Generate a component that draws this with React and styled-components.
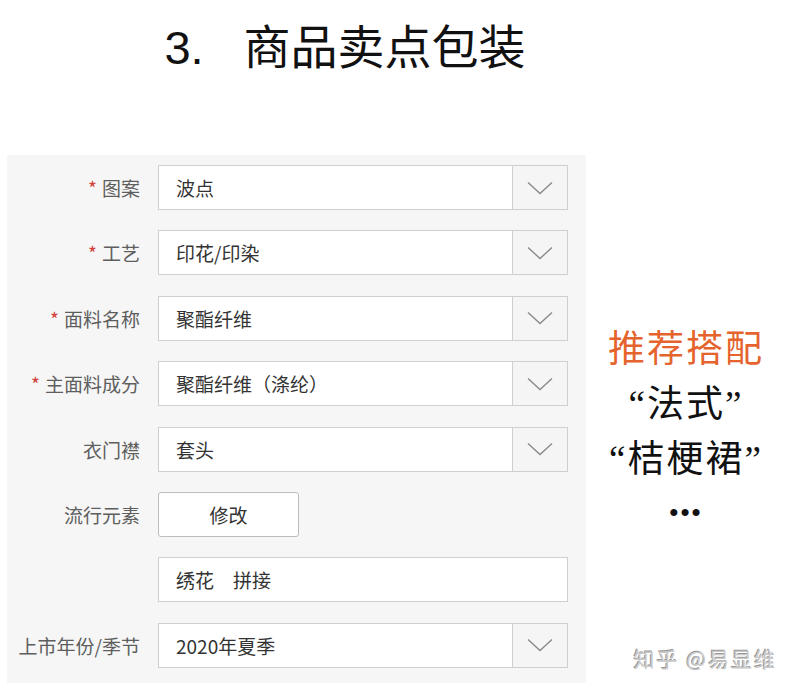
import styled, { createGlobalStyle } from 'styled-components';

const GlobalStyle = createGlobalStyle`
    html, body {
        margin: 0;
        padding: 0;
        background: #ffffff;
    }
    body {
        font-family: 'Noto Sans CJK SC', 'Noto Sans', sans-serif;
        width: 794px;
        height: 699px;
        overflow: hidden;
    }
`;

const fields = [
    { label: '图案', required: true, value: '波点', kind: 'select' },
    { label: '工艺', required: true, value: '印花/印染', kind: 'select' },
    { label: '面料名称', required: true, value: '聚酯纤维', kind: 'select' },
    { label: '主面料成分', required: true, value: '聚酯纤维（涤纶）', kind: 'select' },
    { label: '衣门襟', required: false, value: '套头', kind: 'select' },
    { label: '流行元素', required: false, value: '修改', kind: 'button' },
    { label: '', required: false, value: '绣花　拼接', kind: 'text' },
    { label: '上市年份/季节', required: false, value: '2020年夏季', kind: 'select' },
];

function Chevron() {
    return (
        <svg width='26' height='14' viewBox='0 0 26 14' fill='none'>
            <path d='M1 1.5 L13 12.5 L25 1.5' stroke='#8a8a8a' strokeWidth='1.4' />
        </svg>
    );
}

function Field({ field }) {
    const { label, required, value, kind } = field;
    return (
        <>
            <Label>
                {required && <Star>*</Star>}
                {label}
            </Label>
            {kind === 'select' && (
                <SelectBox>
                    <SelectValue>{value}</SelectValue>
                    <Arrow>
                        <Chevron />
                    </Arrow>
                </SelectBox>
            )}
            {kind === 'button' && <EditButton>{value}</EditButton>}
            {kind === 'text' && (
                <TextBox>
                    <SelectValue>{value}</SelectValue>
                </TextBox>
            )}
        </>
    );
}

export default function App() {
    return (
        <>
            <GlobalStyle />
            <Page>
                <Title>
                    <TitleNum>3.</TitleNum>
                    商品卖点包装
                </Title>
                <Body>
                    <Panel>
                        {fields.map((field, i) => (
                            <Field key={i} field={field} />
                        ))}
                    </Panel>
                    <Side>
                        <SideLine $accent>推荐搭配</SideLine>
                        <SideLine>“法式”</SideLine>
                        <SideLine>“桔梗裙”</SideLine>
                        <Dots>•••</Dots>
                    </Side>
                </Body>
                <Watermark>知乎 @易显维</Watermark>
            </Page>
        </>
    );
}

const Page = styled.div`
    position: relative;
    width: 794px;
    height: 699px;
    display: flex;
    flex-direction: column;
`;

const Title = styled.h1`
    margin: 0;
    padding-top: 20px;
    height: 155px;
    box-sizing: border-box;
    text-align: center;
    font-family: 'Liberation Sans', 'Noto Sans CJK SC', sans-serif;
    font-weight: 400;
    font-size: 47px;
    line-height: 56px;
    color: #111;
    padding-right: 104px;
`;

const TitleNum = styled.span`
    margin-right: 40px;
`;

const Body = styled.div`
    display: flex;
    align-items: flex-start;
`;

const Panel = styled.div`
    margin-left: 7px;
    width: 579px;
    box-sizing: border-box;
    padding: 10px 18px 15px 0;
    background: #f6f6f6;
    display: grid;
    grid-template-columns: 133px 410px;
    grid-auto-rows: 45px;
    column-gap: 18px;
    row-gap: 20.4px;
    align-items: center;
`;

const Label = styled.div`
    text-align: right;
    font-size: 19px;
    color: #5e5e5e;
    white-space: nowrap;
`;

const Star = styled.span`
    color: #d0413a;
    margin-right: 5px;
`;

const boxBase = `
    height: 45px;
    box-sizing: border-box;
    border: 1px solid #cfcfcf;
    background: #fff;
    display: flex;
    align-items: stretch;
`;

const SelectBox = styled.div`
    ${boxBase}
`;

const TextBox = styled.div`
    ${boxBase}
`;

const SelectValue = styled.div`
    flex: 1;
    display: flex;
    align-items: center;
    padding-left: 17px;
    font-size: 19px;
    color: #333;
`;

const Arrow = styled.div`
    width: 54px;
    border-left: 1px solid #cfcfcf;
    background: #f5f5f5;
    display: flex;
    align-items: center;
    justify-content: center;
`;

const EditButton = styled.button`
    width: 141px;
    height: 45px;
    box-sizing: border-box;
    border: 1px solid #bdbdbd;
    border-radius: 3px;
    background: #fff;
    font-family: inherit;
    font-size: 19px;
    color: #333;
    padding: 0;
`;

const Side = styled.div`
    flex: 1;
    display: flex;
    flex-direction: column;
    align-items: center;
    margin-top: 167px;
    padding-right: 8px;
`;

const SideLine = styled.div`
    font-family: 'Liberation Serif', 'Noto Sans CJK SC', serif;
    font-size: 37px;
    line-height: 55px;
    color: ${(p) => (p.$accent ? '#e5642e' : '#111')};
    letter-spacing: 2px;
    white-space: nowrap;
`;

const Dots = styled.div`
    font-family: 'Liberation Sans', sans-serif;
    font-size: 26px;
    line-height: 50px;
    letter-spacing: 2px;
    color: #111;
`;

const Watermark = styled.div`
    position: absolute;
    right: 17px;
    bottom: 26px;
    font-size: 21px;
    color: #c8c8c8;
    text-shadow: 1px 1px 0 #fff, -1px -1px 0 #999;
    letter-spacing: 2px;
`;
